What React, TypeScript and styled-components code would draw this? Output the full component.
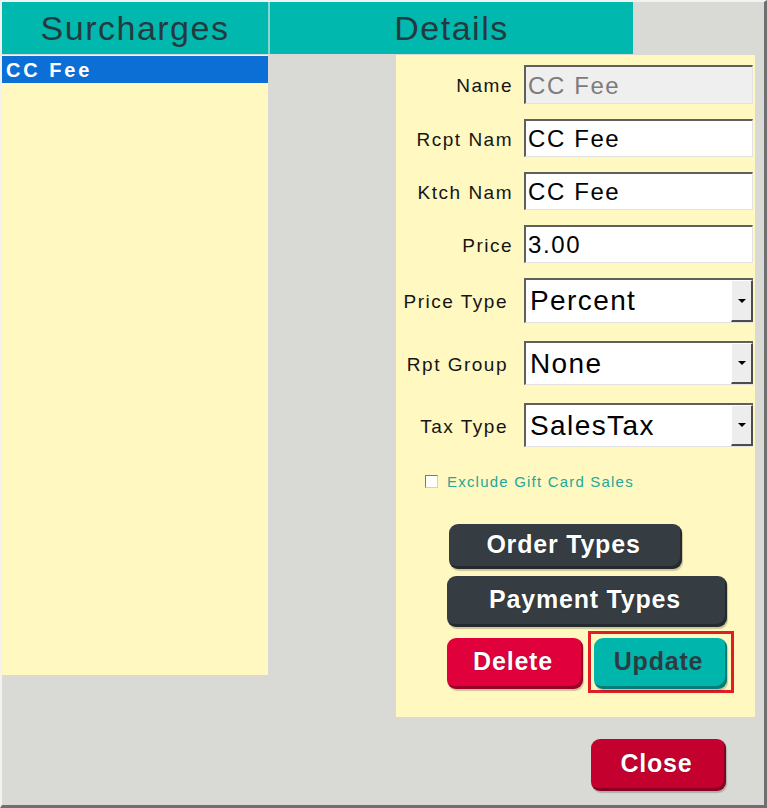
import React from "react";
import styled, { createGlobalStyle } from "styled-components";

const GlobalStyle = createGlobalStyle`
  html, body {
    margin: 0;
    padding: 0;
    background: #d9d9d5;
  }
  body {
    font-family: "Liberation Sans", Arial, sans-serif;
  }
  * {
    box-sizing: border-box;
  }
`;

const Window = styled.div`
  width: 767px;
  height: 808px;
  background: #d9d9d5;
  border-top: 2px solid #f2f2f0;
  border-left: 2px solid #f2f2f0;
  border-right: 3px solid #6f6f6f;
  border-bottom: 3px solid #6f6f6f;
  display: flex;
  flex-direction: column;
  overflow: hidden;
`;

const HeaderBar = styled.div`
  display: flex;
  height: 52px;
`;

const HeaderCell = styled.div<{ $w: number }>`
  width: ${(p) => p.$w}px;
  height: 52px;
  background: #00b8ad;
  color: #243a40;
  font-size: 34px;
  letter-spacing: 1.5px;
  display: flex;
  align-items: center;
  justify-content: center;
  padding-top: 1px;
  & + & {
    border-left: 2px solid #8cd6cf;
  }
`;

const Body = styled.div`
  display: flex;
  align-items: flex-start;
  margin-top: 1px;
`;

const List = styled.div`
  width: 266px;
  height: 620px;
  background: #fff8c1;
  padding-top: 1px;
`;

const ListRow = styled.div<{ $selected?: boolean }>`
  height: 27px;
  line-height: 28px;
  padding-left: 4px;
  font-size: 20px;
  font-weight: bold;
  letter-spacing: 2.9px;
  color: ${(p) => (p.$selected ? "#ffffff" : "#111")};
  background: ${(p) => (p.$selected ? "#0b6fd5" : "transparent")};
`;

const DetailsPanel = styled.div`
  margin-left: 128px;
  width: 359px;
  height: 662px;
  background: #fff8c1;
  padding: 10px 2px 0 0;
  display: flex;
  flex-direction: column;
`;

const FieldRow = styled.div<{ $mt: number; $h: number }>`
  display: grid;
  grid-template-columns: 117px 229px;
  column-gap: 11px;
  align-items: center;
  margin-top: ${(p) => p.$mt}px;
  height: ${(p) => p.$h}px;
`;

const Label = styled.div<{ $pr?: number }>`
  text-align: right;
  font-size: 19px;
  letter-spacing: 1.5px;
  color: #151515;
  padding-top: 3px;
  padding-right: ${(p) => p.$pr ?? 0}px;
  white-space: nowrap;
`;

const TextBox = styled.input<{ $muted?: boolean }>`
  width: 100%;
  height: 100%;
  margin: 0;
  border-top: 2px solid #5f5f5f;
  border-left: 2px solid #5f5f5f;
  border-right: 1px solid #e2e2e2;
  border-bottom: 1px solid #e2e2e2;
  padding: 1px 0 0 2px;
  font-family: "Liberation Sans", Arial, sans-serif;
  font-size: 24px;
  letter-spacing: 1.6px;
  color: ${(p) => (p.$muted ? "#7c7c7c" : "#000")};
  background: ${(p) => (p.$muted ? "#efefef" : "#ffffff")};
  outline: none;
`;

const SelectBox = styled.div`
  height: 100%;
  display: flex;
  align-items: stretch;
  background: #ffffff;
  border-top: 2px solid #5f5f5f;
  border-left: 2px solid #5f5f5f;
  border-bottom: 1px solid #e2e2e2;
`;

const SelectText = styled.div`
  flex: 1;
  display: flex;
  align-items: center;
  padding-left: 4px;
  font-size: 28px;
  letter-spacing: 1.4px;
  color: #000;
`;

const DropButton = styled.div`
  width: 22px;
  background: #ededed;
  border-left: 1px solid #ffffff;
  border-top: 1px solid #ffffff;
  border-right: 2px solid #4c4c4c;
  border-bottom: 2px solid #4c4c4c;
  display: flex;
  align-items: center;
  justify-content: center;
`;

const Arrow = styled.span`
  width: 0;
  height: 0;
  border-left: 4px solid transparent;
  border-right: 4px solid transparent;
  border-top: 4px solid #000;
`;

const CheckRow = styled.label`
  display: flex;
  align-items: center;
  margin-top: 27px;
  margin-left: 29px;
  height: 14px;
  gap: 9px;
  font-size: 15px;
  letter-spacing: 1.2px;
  color: #22a898;
`;

const CheckBox = styled.span`
  width: 13px;
  height: 13px;
  background: #ffffff;
  border-top: 1px solid #7a7a7a;
  border-left: 1px solid #7a7a7a;
  border-right: 1px solid #d0d0d0;
  border-bottom: 1px solid #d0d0d0;
`;

const ButtonStack = styled.div`
  display: flex;
  flex-direction: column;
  align-items: flex-start;
  margin-left: 51px;
  margin-top: 36px;
`;

type Tone = "dark" | "red" | "teal" | "wine";

const toneBg: Record<Tone, string> = {
  dark: "#353d43",
  red: "#e0003c",
  teal: "#00b5ab",
  wine: "#c4002f",
};

const ActionButton = styled.button<{ $tone: Tone; $w: number; $h: number; $mt?: number; $ml?: number }>`
  width: ${(p) => p.$w}px;
  height: ${(p) => p.$h}px;
  margin: ${(p) => p.$mt ?? 0}px 0 0 ${(p) => p.$ml ?? 0}px;
  padding: 0 4px 4px 0;
  border: none;
  border-radius: 9px;
  background: ${(p) => toneBg[p.$tone]};
  box-shadow: inset -2px -3px 0 rgba(0, 0, 0, 0.3), 1px 2px 1px rgba(0, 0, 0, 0.2);
  font-family: "Liberation Sans", Arial, sans-serif;
  font-size: 25px;
  font-weight: bold;
  letter-spacing: 0.8px;
  color: ${(p) => (p.$tone === "teal" ? "#2b3d43" : "#ffffff")};
  text-shadow: ${(p) => (p.$tone === "teal" ? "none" : "0 0 1px rgba(0,0,0,0.6)")};
  cursor: pointer;
`;

const ButtonPair = styled.div`
  display: flex;
  align-items: flex-start;
  margin-top: 4px;
`;

const FocusFrame = styled.div`
  margin-left: 5px;
  border: 3px solid #e21d23;
  padding: 4px 4px 1px 3px;
  display: flex;
`;

const Footer = styled.div`
  display: flex;
  justify-content: flex-end;
  padding-right: 38px;
  margin-top: 22px;
`;

type Field =
  | { kind: "text"; label: string; value: string; mt: number; h: number; muted?: boolean }
  | { kind: "select"; label: string; value: string; mt: number; h: number };

const fields: Field[] = [
  { kind: "text", label: "Name", value: "CC Fee", mt: 0, h: 39, muted: true },
  { kind: "text", label: "Rcpt Nam", value: "CC Fee", mt: 15, h: 38 },
  { kind: "text", label: "Ktch Nam", value: "CC Fee", mt: 15, h: 38 },
  { kind: "text", label: "Price", value: "3.00", mt: 15, h: 38 },
  { kind: "select", label: "Price Type", value: "Percent", mt: 15, h: 45 },
  { kind: "select", label: "Rpt Group", value: "None", mt: 18, h: 44 },
  { kind: "select", label: "Tax Type", value: "SalesTax", mt: 18, h: 44 },
];

export default function App() {
  return (
    <>
      <GlobalStyle />
      <Window>
        <HeaderBar>
          <HeaderCell $w={266}>Surcharges</HeaderCell>
          <HeaderCell $w={365}>Details</HeaderCell>
        </HeaderBar>
        <Body>
          <List>
            <ListRow $selected>CC Fee</ListRow>
          </List>
          <DetailsPanel>
            {fields.map((f) => (
              <FieldRow key={f.label} $mt={f.mt} $h={f.h}>
                <Label $pr={f.kind === "select" ? 5 : 0}>{f.label}</Label>
                {f.kind === "text" ? (
                  <TextBox readOnly value={f.value} $muted={f.muted} />
                ) : (
                  <SelectBox>
                    <SelectText>{f.value}</SelectText>
                    <DropButton>
                      <Arrow />
                    </DropButton>
                  </SelectBox>
                )}
              </FieldRow>
            ))}
            <CheckRow>
              <CheckBox />
              Exclude Gift Card Sales
            </CheckRow>
            <ButtonStack>
              <ActionButton $tone="dark" $w={233} $h={45} $ml={2}>
                Order Types
              </ActionButton>
              <ActionButton $tone="dark" $w={280} $h={51} $mt={7}>
                Payment Types
              </ActionButton>
              <ButtonPair>
                <ActionButton $tone="red" $w={136} $h={51} $mt={7}>
                  Delete
                </ActionButton>
                <FocusFrame>
                  <ActionButton $tone="teal" $w={133} $h={51}>
                    Update
                  </ActionButton>
                </FocusFrame>
              </ButtonPair>
            </ButtonStack>
          </DetailsPanel>
        </Body>
        <Footer>
          <ActionButton $tone="wine" $w={135} $h={52}>
            Close
          </ActionButton>
        </Footer>
      </Window>
    </>
  );
}
